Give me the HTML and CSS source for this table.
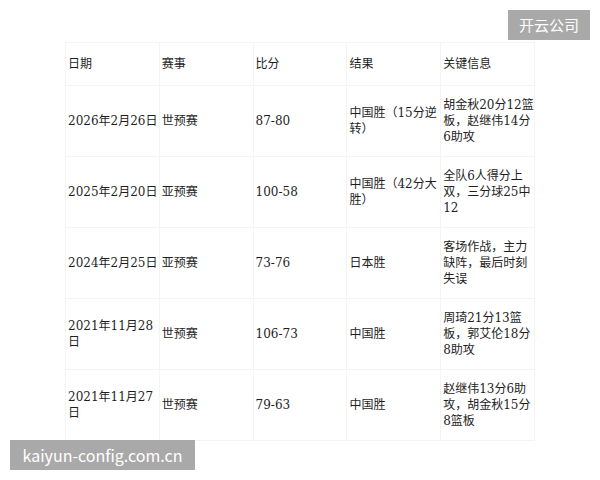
FILE: index.html
```html
<!DOCTYPE html>
<html lang="zh-CN">
<head>
<meta charset="utf-8">
<title>中国男篮对阵日本</title>
<link rel="stylesheet" href="styles.css">
</head>
<body>
<table class="games">
  <thead>
    <tr class="head-row">
      <th>日期</th><th>赛事</th><th>比分</th><th>结果</th><th>关键信息</th>
    </tr>
  </thead>
  <tbody>
    <tr><td>2026年2月26日</td><td>世预赛</td><td>87-80</td><td>中国胜（15分逆转）</td><td>胡金秋20分12篮板，赵继伟14分6助攻</td></tr>
    <tr><td>2025年2月20日</td><td>亚预赛</td><td>100-58</td><td>中国胜（42分大胜）</td><td>全队6人得分上双，三分球25中12</td></tr>
    <tr><td>2024年2月25日</td><td>亚预赛</td><td>73-76</td><td>日本胜</td><td>客场作战，主力缺阵，最后时刻失误</td></tr>
    <tr><td>2021年11月28日</td><td>世预赛</td><td>106-73</td><td>中国胜</td><td>周琦21分13篮板，郭艾伦18分8助攻</td></tr>
    <tr><td>2021年11月27日</td><td>世预赛</td><td>79-63</td><td>中国胜</td><td>赵继伟13分6助攻，胡金秋15分8篮板</td></tr>
  </tbody>
</table>
<div class="badge badge-top">开云公司</div>
<div class="badge badge-bottom">kaiyun-config.com.cn</div>
</body>
</html>
```
FILE: styles.css
```css
html, body {
  margin: 0;
  padding: 0;
  background: #ffffff;
}
body {
  width: 600px;
  height: 480px;
  position: relative;
  overflow: hidden;
  font-family: "DejaVu Serif", "Noto Sans CJK SC", serif;
  font-size: 12px;
  line-height: 16px;
  color: #1e1e1e;
}
.games {
  width: 470px;
  margin: 42px auto 0;
  border-collapse: collapse;
  table-layout: fixed;
}
.games th,
.games td {
  border: 1px solid #f4f4f4;
  padding: 0 0 0 2px;
  text-align: left;
  vertical-align: middle;
  font-weight: normal;
  word-break: break-all;
}
.head-row th {
  height: 42px;
}
.games tbody td {
  height: 70px;
}
.badge {
  position: absolute;
  background: #a9a9a9;
  color: #ffffff;
  font-family: "Noto Sans CJK SC", "Noto Sans", sans-serif;
  display: flex;
  align-items: center;
  justify-content: center;
}
.badge-top {
  top: 10px;
  left: 508px;
  width: 82px;
  height: 30px;
  font-size: 15px;
}
.badge-bottom {
  top: 440px;
  left: 10px;
  width: 185px;
  height: 30px;
  font-size: 16px;
}
```
